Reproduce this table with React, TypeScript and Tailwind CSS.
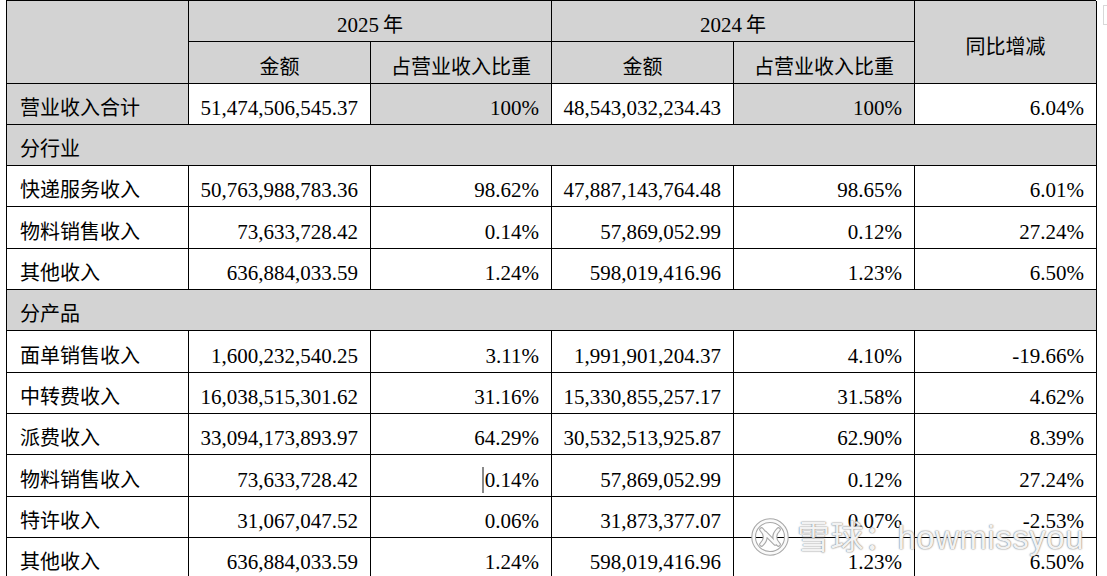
import React from 'react';

type Row = [string, string, string, string, string, string];

const sectionA: Row[] = [
  ['快递服务收入', '50,763,988,783.36', '98.62%', '47,887,143,764.48', '98.65%', '6.01%'],
  ['物料销售收入', '73,633,728.42', '0.14%', '57,869,052.99', '0.12%', '27.24%'],
  ['其他收入', '636,884,033.59', '1.24%', '598,019,416.96', '1.23%', '6.50%'],
];

const sectionB: Row[] = [
  ['面单销售收入', '1,600,232,540.25', '3.11%', '1,991,901,204.37', '4.10%', '-19.66%'],
  ['中转费收入', '16,038,515,301.62', '31.16%', '15,330,855,257.17', '31.58%', '4.62%'],
  ['派费收入', '33,094,173,893.97', '64.29%', '30,532,513,925.87', '62.90%', '8.39%'],
  ['物料销售收入', '73,633,728.42', '0.14%', '57,869,052.99', '0.12%', '27.24%'],
  ['特许收入', '31,067,047.52', '0.06%', '31,873,377.07', '0.07%', '-2.53%'],
  ['其他收入', '636,884,033.59', '1.24%', '598,019,416.96', '1.23%', '6.50%'],
];

function Cell({ className = '', children }: { className?: string; children?: React.ReactNode }) {
  return (
    <div className={`flex items-end border-r border-b border-black pb-[4px] leading-[24px] ${className}`}>
      {children}
    </div>
  );
}

function Label({ text, gray }: { text: string; gray?: boolean }) {
  return <Cell className={`pl-[13px] text-[20px] ${gray ? 'bg-[#d3d3d3]' : 'bg-white'}`}>{text}</Cell>;
}

function Num({ text, gray, cursor }: { text: string; gray?: boolean; cursor?: boolean }) {
  return (
    <Cell className={`justify-end pr-[12px] text-[21px] ${gray ? 'bg-[#d3d3d3]' : 'bg-white'}`}>
      {cursor && <span className="mb-[-1px] mr-[1px] inline-block h-[26px] w-[2px] self-end bg-[#8a8a8a]" />}
      {text}
    </Cell>
  );
}

function Section({ title }: { title: string }) {
  return <Cell className="col-span-6 bg-[#d3d3d3] pl-[13px] text-[20px]">{title}</Cell>;
}

function DataRow({ row, cursorAt }: { row: Row; cursorAt?: number }) {
  return (
    <>
      <Label text={row[0]} />
      {row.slice(1).map((v, i) => (
        <Num key={i} text={v} cursor={cursorAt === i + 1} />
      ))}
    </>
  );
}

function Watermark() {
  return (
    <div className="pointer-events-none absolute left-[751px] top-[518px] flex items-center gap-[8px] text-[33px] leading-none text-white/90 font-['Liberation_Sans','Noto_Sans_CJK_SC',sans-serif] [text-shadow:0_0_1px_#7a7a7a,0_0_2px_#8f8f8f]">
      <svg width="38" height="38" viewBox="0 0 36 36">
        <circle cx="18" cy="18" r="15.5" fill="none" stroke="#a8a8a8" strokeWidth="4.5" />
        <circle cx="18" cy="18" r="15.5" fill="none" stroke="#fafafa" strokeWidth="2.5" />
        <path d="M10 11 Q17 18 10 25 M26 11 Q19 18 26 25 M13 14 L23 24" fill="none" stroke="#a8a8a8" strokeWidth="4.5" strokeLinecap="round" />
        <path d="M10 11 Q17 18 10 25 M26 11 Q19 18 26 25 M13 14 L23 24" fill="none" stroke="#fafafa" strokeWidth="2.5" strokeLinecap="round" />
      </svg>
      <span className="tracking-[0.5px]">雪球：howmissyou</span>
    </div>
  );
}

export default function App() {
  return (
    <div className="relative h-[576px] w-[1107px] overflow-hidden bg-white text-black font-['Liberation_Serif','Noto_Sans_CJK_SC',serif]">
      <div className="ml-[6px] grid w-[1090px] grid-cols-[182px_182px_181px_182px_181px_182px] auto-rows-[41.3px] border-t border-l border-black">
        {/* header */}
        <Cell className="row-span-2 bg-[#d3d3d3]" />
        <Cell className="col-span-2 justify-center bg-[#d3d3d3] text-[21px]">
          2025 <span className="ml-[4px] text-[20px]">年</span>
        </Cell>
        <Cell className="col-span-2 justify-center bg-[#d3d3d3] text-[21px]">
          2024 <span className="ml-[4px] text-[20px]">年</span>
        </Cell>
        <div className="row-span-2 flex justify-center border-r border-b border-black bg-[#d3d3d3] pt-[34px] text-[20px] leading-[24px]">
          同比增减
        </div>
        <Cell className="justify-center bg-[#d3d3d3] text-[20px]">金额</Cell>
        <Cell className="justify-center bg-[#d3d3d3] text-[20px]">占营业收入比重</Cell>
        <Cell className="justify-center bg-[#d3d3d3] text-[20px]">金额</Cell>
        <Cell className="justify-center bg-[#d3d3d3] text-[20px]">占营业收入比重</Cell>

        {/* total */}
        <Label text="营业收入合计" gray />
        <Num text="51,474,506,545.37" />
        <Num text="100%" gray />
        <Num text="48,543,032,234.43" />
        <Num text="100%" gray />
        <Num text="6.04%" />

        <Section title="分行业" />
        {sectionA.map((r, i) => (
          <DataRow key={'a' + i} row={r} />
        ))}

        <Section title="分产品" />
        {sectionB.map((r, i) => (
          <DataRow key={'b' + i} row={r} cursorAt={i === 3 ? 2 : undefined} />
        ))}
      </div>

      <div className="absolute left-[1103px] top-[5px] h-[20px] w-[10px] border border-[#d8d8d8]" />
      <Watermark />
    </div>
  );
}
